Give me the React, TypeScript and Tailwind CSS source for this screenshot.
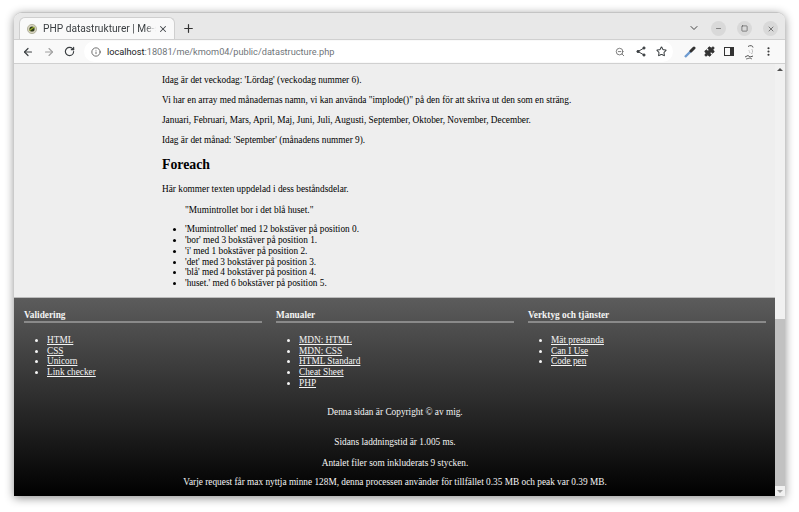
import React from 'react';
import { ArrowLeft, ArrowRight, RotateCw, Info, ZoomOut, Star, Puzzle, MoreVertical, X, Plus, ChevronDown, Minus, Square } from 'lucide-react';

const months = ["'Mumintrollet' med 12 bokstäver på position 0.", "'bor' med 3 bokstäver på position 1.", "'i' med 1 bokstäver på position 2.", "'det' med 3 bokstäver på position 3.", "'blå' med 4 bokstäver på position 4.", "'huset.' med 6 bokstäver på position 5."];

const columns = [
  { title: 'Validering', links: ['HTML', 'CSS', 'Unicorn', 'Link checker'] },
  { title: 'Manualer', links: ['MDN: HTML', 'MDN: CSS', 'HTML Standard', 'Cheat Sheet', 'PHP'] },
  { title: 'Verktyg och tjänster', links: ['Mät prestanda', 'Can I Use', 'Code pen'] },
];

const App = () => {
  return (
    <div className="h-[512px] w-[799px] overflow-hidden bg-white pl-[14px] pt-[12px]">
      <div className="flex h-[484px] w-[771px] flex-col overflow-hidden rounded-t-[8px] border-t border-[#c4c4c4] shadow-[0_2px_10px_rgba(0,0,0,0.45)]">
        {/* tab strip */}
        <div className="flex h-[26px] items-end bg-[#e8e8e8] pl-[5px]" style={{ fontFamily: 'Roboto, sans-serif' }}>
          <div className="flex h-[22px] w-[156px] items-center rounded-t-[6px] border border-b-0 border-[#cfcfcf] bg-[#f9f9f9] pl-[7px] pr-[6px]">
            <svg className="h-[10px] w-[10px] shrink-0" viewBox="0 0 10 10">
              <circle cx="5" cy="5" r="4.6" fill="#d8d4c0" stroke="#a8a890" strokeWidth="0.8" />
              <circle cx="5" cy="5" r="2.6" fill="#2f3a1c" />
              <path d="M2.5 6.5 5 4.5 7.5 3" stroke="#9ab02c" strokeWidth="1.2" fill="none" />
            </svg>
            <span className="ml-[6px] w-[113px] shrink-0 overflow-hidden whitespace-nowrap text-[10.2px] text-[#3c4043] [mask-image:linear-gradient(to_right,black_90%,transparent)]">PHP datastrukturer | Me-s</span>
            <X className="ml-[2px] h-[10px] w-[10px] shrink-0 text-[#45484c]" strokeWidth={2.5} />
          </div>
          <Plus className="mb-[4px] ml-[7px] h-[13px] w-[13px] text-[#333]" strokeWidth={2.2} />
          <div className="flex-1" />
          <ChevronDown className="mb-[5px] h-[12px] w-[12px] text-[#444]" />
          <div className="mb-[3px] ml-[11px] flex h-[15px] w-[15px] items-center justify-center rounded-full bg-[#d9d9d9]"><Minus className="h-[7px] w-[7px] text-[#444]" /></div>
          <div className="mb-[3px] ml-[11px] flex h-[15px] w-[15px] items-center justify-center rounded-full bg-[#d9d9d9]"><Square className="h-[7px] w-[7px] text-[#444]" /></div>
          <div className="mb-[3px] ml-[11px] mr-[7px] flex h-[15px] w-[15px] items-center justify-center rounded-full bg-[#d9d9d9]"><X className="h-[8px] w-[8px] text-[#444]" /></div>
        </div>
        {/* toolbar */}
        <div className="flex h-[25px] items-center border-y border-[#d0d0d0] bg-[#f9f9f9] pl-[8px] pr-[9px]" style={{ fontFamily: 'Roboto, sans-serif' }}>
          <ArrowLeft className="h-[12px] w-[12px] text-[#3c4043]" strokeWidth={2.4} />
          <ArrowRight className="ml-[9px] h-[12px] w-[12px] text-[#a0a0a0]" strokeWidth={2.2} />
          <RotateCw className="ml-[9px] h-[11px] w-[11px] text-[#3c4043]" strokeWidth={2.6} />
          <div className="ml-[9px] flex h-[21px] w-[589px] items-center rounded-full bg-white pl-[7px] pr-[6px]">
            <Info className="h-[10px] w-[10px] text-[#555]" />
            <span className="ml-[6px] whitespace-nowrap text-[9.2px] text-[#70757a]"><span className="text-[#202124]">localhost</span>:18081/me/kmom04/public/datastructure.php</span>
            <div className="flex-1" />
            <ZoomOut className="h-[10px] w-[10px] text-[#666]" />
            <svg className="ml-[11px] h-[11px] w-[10px]" viewBox="0 0 10 11" fill="#3c4043" stroke="#3c4043" strokeWidth="1">
              <path d="M8 2 2 5.5 8 9" fill="none" />
              <circle cx="8" cy="2" r="1.1" />
              <circle cx="2" cy="5.5" r="1.1" />
              <circle cx="8" cy="9" r="1.1" />
            </svg>
            <Star className="ml-[10px] h-[11px] w-[11px] text-[#3c4043]" strokeWidth={2.2} />
          </div>
          <svg className="ml-[11px] h-[12px] w-[12px]" viewBox="0 0 12 12" fill="none">
            <path d="M1 11 6.500 5.500" stroke="#6d9bd0" strokeWidth="2.4" />
            <path d="M7 5 10 2" stroke="#333" strokeWidth="3" strokeLinecap="round" />
          </svg>
          <Puzzle className="ml-[8px] h-[11px] w-[11px] fill-[#333] text-[#333]" />
          <div className="ml-[9px] flex h-[9px] w-[10px] justify-end border-[1.5px] border-[#333]"><div className="h-full w-[3px] bg-[#333]" /></div>
          <svg className="ml-[10px] h-[16px] w-[12px]" viewBox="0 0 12 16" fill="none" stroke="#555" strokeWidth="1">
            <path d="M4 2.5c2-1.5 5-1 5 1" />
            <path d="M8 5.5c.8 1.500.6 3-.5 4.500" strokeDasharray="1 1" stroke="#888" />
            <path d="M5 6.500 6 9" strokeDasharray="1 1" stroke="#aaa" />
            <path d="M1 13l3-1.500 2 1.500 3-1" />
            <path d="M2 15l4-1 2 1" stroke="#777" />
          </svg>
          <MoreVertical className="ml-[7px] h-[11px] w-[11px] text-[#333]" strokeWidth={2.6} />
        </div>
        {/* page */}
        <div className="flex min-h-0 flex-1 bg-[#eeeeee]" style={{ fontFamily: '"Liberation Serif", serif' }}>
          <div className="flex w-[761px] flex-col text-[9.3px] leading-[11px] text-black">
            <main className="h-[233px] pl-[148px] pt-[11px]">
              <p>Idag är det veckodag: 'Lördag' (veckodag nummer 6).</p>
              <p className="mt-[9px]">Vi har en array med månadernas namn, vi kan använda "implode()" på den för att skriva ut den som en sträng.</p>
              <p className="mt-[9px]">Januari, Februari, Mars, April, Maj, Juni, Juli, Augusti, September, Oktober, November, December.</p>
              <p className="mt-[9px]">Idag är det månad: 'September' (månadens nummer 9).</p>
              <h2 className="mt-[10px] text-[13.8px] font-bold leading-[18px]">Foreach</h2>
              <p className="mt-[10px]">Här kommer texten uppdelad i dess beståndsdelar.</p>
              <blockquote className="ml-[23px] mt-[10px]">"Mumintrollet bor i det blå huset."</blockquote>
              <ul className="ml-[23px] mt-[8px] list-disc">
                {months.map((m) => (
                  <li key={m} className="h-[10.85px]">{m}</li>
                ))}
              </ul>
            </main>
            <footer className="flex-1 border-t border-[#bbbbbb] bg-[linear-gradient(#5c5c5c,#000000)] pl-[10px] pr-[9px] pt-[12px] text-[#f4f4f4]">
              <div className="grid grid-cols-3 gap-x-[14px]">
                {columns.map((c) => (
                  <div key={c.title}>
                    <h4 className="border-b-[2px] border-[#8a8a8a] font-bold">{c.title}</h4>
                    <ul className="ml-[23px] mt-[12px] h-[54px] list-disc">
                      {c.links.map((l) => (
                        <li key={l} className="h-[10.7px]"><a className="underline">{l}</a></li>
                      ))}
                    </ul>
                  </div>
                ))}
              </div>
              <p className="mt-[18px] text-center">Denna sidan är Copyright © av mig.</p>
              <p className="mt-[19px] text-center">Sidans laddningstid är 1.005 ms.</p>
              <p className="mt-[10px] text-center">Antalet filer som inkluderats 9 stycken.</p>
              <p className="mt-[8px] text-center">Varje request får max nyttja minne 128M, denna processen använder för tillfället 0.35 MB och peak var 0.39 MB.</p>
            </footer>
          </div>
          {/* scrollbar */}
          <div className="flex w-[10px] flex-col bg-[#f1f1f1]">
            <div className="flex h-[10px] items-center justify-center"><div className="h-0 w-0 border-x-[3px] border-b-[3px] border-x-transparent border-b-[#505050]" /></div>
            <div className="mt-[245px] flex-1 bg-[#c1c1c1]" />
            <div className="flex h-[10px] items-center justify-center"><div className="h-0 w-0 border-x-[3px] border-t-[3px] border-x-transparent border-t-[#a0a0a0]" /></div>
          </div>
        </div>
      </div>
    </div>
  );
};

export default App;
